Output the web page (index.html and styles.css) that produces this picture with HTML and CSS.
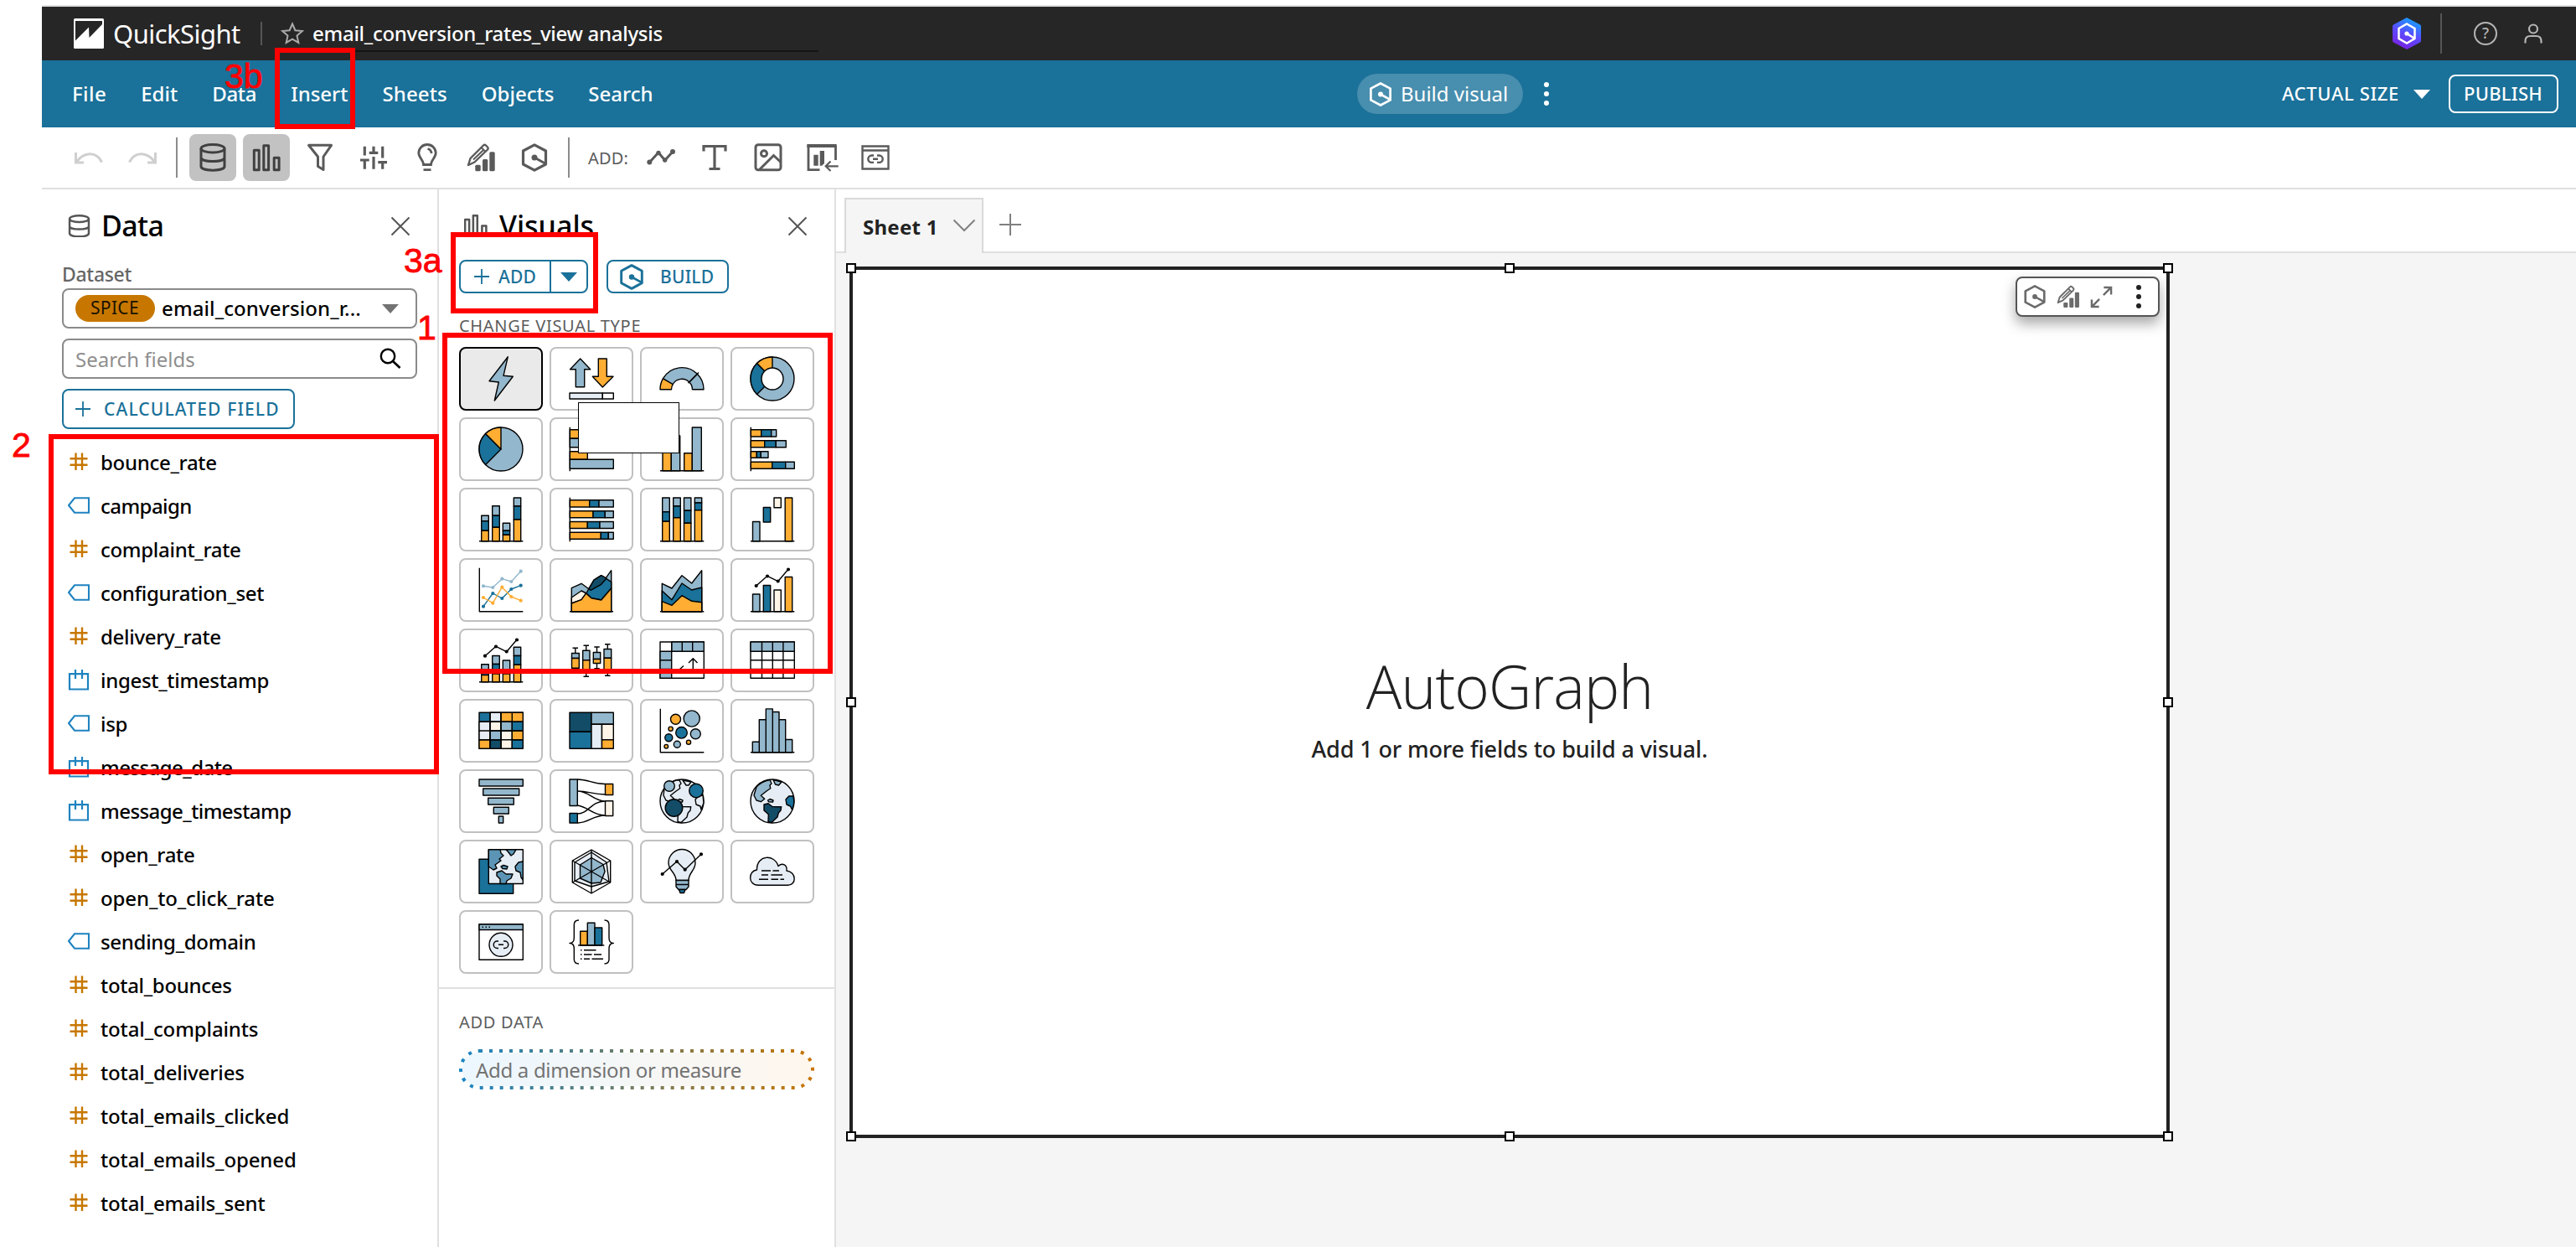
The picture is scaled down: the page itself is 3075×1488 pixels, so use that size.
FILE: index.html
```html
<!DOCTYPE html>
<html lang="en">
<head>
<meta charset="utf-8">
<title>email_conversion_rates_view analysis</title>
<link rel="stylesheet" href="styles.css">
</head>
<body>
<svg class="defs" width="0" height="0" aria-hidden="true">
  <symbol id="i-num" viewBox="0 0 26 26"><path d="M9.5 2.5V23M17 2.5V23M2.5 9.3H23.5M2.5 16.7H23.5" fill="none" stroke="#c77700" stroke-width="2.4"/></symbol>
  <symbol id="i-tag" viewBox="0 0 26 26"><path d="M25 4.3V21.7H8L1 13 8 4.3Z" fill="none" stroke="#1f83c0" stroke-width="2.1"/></symbol>
  <symbol id="i-date" viewBox="0 0 26 26"><path d="M2 6.2H24V24.5H2ZM9 1V12M17 1V12" fill="none" stroke="#1f83c0" stroke-width="2.2"/></symbol>
  <symbol id="i-hex" viewBox="0 0 56 56"><path d="M28 12.8 41.5 20V36L28 43.2 14.5 36V20Z" fill="none" stroke="currentColor" stroke-width="3.2" stroke-linejoin="round"/><circle cx="28" cy="28" r="3.5" fill="currentColor"/><path d="M28 28 40.7 35" stroke="currentColor" stroke-width="3"/></symbol>
  <symbol id="i-pencil" viewBox="0 0 56 56"><path d="M13 37 15.5 29 31 13.5Q32.5 12 34 13.5L36 15.5Q37.3 17 36 18.5L20.5 33.5Z" fill="none" stroke="currentColor" stroke-width="2.4" stroke-linejoin="round"/><path d="M28.5 16 33.5 21M19 30.5 30.5 19.5" stroke="currentColor" stroke-width="2"/><g fill="currentColor"><rect x="21.3" y="36.7" width="6.4" height="7.6" rx="1.5"/><rect x="30" y="30" width="6.3" height="14.3" rx="1.5"/><rect x="38.3" y="21.3" width="6.4" height="23" rx="1.5"/></g></symbol>
  <symbol id="i-close" viewBox="0 0 24 24"><path d="M1.5 1.5 22.5 22.5M22.5 1.5 1.5 22.5" fill="none" stroke="#555" stroke-width="2"/></symbol>
  <symbol id="i-db" viewBox="0 0 56 56"><g fill="none" stroke="currentColor" stroke-width="3"><ellipse cx="28" cy="17.3" rx="14" ry="4.8"/><path d="M14 17.3V38.5C14 44.7 42 44.7 42 38.5V17.3M14 28C14 34 42 34 42 28"/></g></symbol>
  <symbol id="i-bars" viewBox="0 0 56 56"><path d="M13.3 19.2H19.2V42.7H13.3ZM24.8 13.7H30.6V42.7H24.8ZM37.2 28.2H43.1V42.7H37.2Z" fill="none" stroke="currentColor" stroke-width="3" stroke-linejoin="round"/></symbol>
  <symbol id="i-land" viewBox="0 0 54 54"><path d="M12 5.5 20 2 24 2 26 6 24 8 24.7 11.7 20 15 13.3 20.3 17.7 24.3 13.3 27.7 8 26 5 20 6 12Z"/><path d="M28 2 38 4 35 8 32 8Z"/><path d="M17 31 22 29.7 27 33.5 37.7 33.7 37 38 34.3 41 33 46 26 52.5 22 51.5 22.3 42.7 17 38Z"/><path d="M52 20 46.7 21 43 25 44 31 49 33 50 37 53 29Z"/><path d="M21.5 26 24 24.5 28 26 27.5 28 22.5 27.7Z"/></symbol>
</svg>

<div class="app">
  <header class="titlebar">
    <svg class="logo" viewBox="0 0 36 36"><rect width="36" height="36" rx="1.5" fill="#fff"/><path d="M2 3H34V7L18.5 23 18 10.5 2 26.5Z" fill="#262626"/></svg>
    <span class="brand">QuickSight</span>
    <span class="title-sep"></span>
    <svg class="star" viewBox="0 0 28 28"><path d="M14 2.5 17.4 10.2 25.8 11 19.5 16.6 21.3 24.9 14 20.6 6.7 24.9 8.5 16.6 2.2 11 10.6 10.2Z" fill="none" stroke="#ababab" stroke-width="2"/></svg>
    <span class="analysis">email_conversion_rates_view analysis</span>
    <span class="title-line"></span>
    <div class="title-right">
      <svg class="qlogo" viewBox="0 0 34 38"><defs><linearGradient id="q" x1="0.7" y1="0" x2="0.3" y2="1"><stop offset="0" stop-color="#12a5ff"/><stop offset=".5" stop-color="#5a4bff"/><stop offset="1" stop-color="#7a1fe0"/></linearGradient></defs><path d="M17 0 33 8.5Q34 9 34 10.5V27.5Q34 29 33 29.5L17 38 1 29.5Q0 29 0 27.5V10.5Q0 9 1 8.5Z" fill="url(#q)"/><path d="M17 7.5 26.5 13V25L17 30.5 7.5 25V13Z" fill="none" stroke="#fff" stroke-width="2.5"/><circle cx="17" cy="19" r="2.6" fill="#fff"/><path d="M17 19 26.5 25" stroke="#fff" stroke-width="2.5"/></svg>
      <span class="right-sep"></span>
      <span class="help">?</span>
      <svg class="user" viewBox="0 0 22 24"><g fill="none" stroke="#b5b5b5" stroke-width="2.2"><circle cx="11" cy="6.5" r="5"/><path d="M1.5 23.5V21Q1.5 15 7.5 15H14.5Q20.5 15 20.5 21V23.5"/></g></svg>
    </div>
  </header>

  <nav class="menubar">
    <div class="menus"><span>File</span><span>Edit</span><span>Data</span><span>Insert</span><span>Sheets</span><span>Objects</span><span>Search</span></div>
    <div class="build-pill"><svg viewBox="12 10 32 36"><use href="#i-hex" width="56" height="56"/></svg><span>Build visual</span></div>
    <svg class="kebab light" viewBox="0 0 6 28"><circle cx="3" cy="3" r="3"/><circle cx="3" cy="14" r="3"/><circle cx="3" cy="25" r="3"/></svg>
    <div class="menu-right"><span class="size">ACTUAL SIZE</span><span class="caret white"></span><span class="publish">PUBLISH</span></div>
  </nav>

  <div class="toolbar">
    <span class="tool off"><svg viewBox="0 0 56 56"><g fill="none" stroke="currentColor" stroke-width="3"><path d="M12.5 22V34H22M13 33.5C22 21 37 20 43.5 33.5"/></g></svg></span>
    <span class="tool off"><svg viewBox="0 0 56 56"><g fill="none" stroke="currentColor" stroke-width="3"><path d="M43.5 22V34H34M43 33.5C34 21 19 20 12.5 33.5"/></g></svg></span>
    <span class="tool-sep"></span>
    <span class="tool on"><svg><use href="#i-db"/></svg></span>
    <span class="tool on"><svg><use href="#i-bars"/></svg></span>
    <span class="tool"><svg viewBox="0 0 56 56"><path d="M14.5 13.3H41.5L32 27V42.5L25.5 38.5V27Z" fill="none" stroke="currentColor" stroke-width="3" stroke-linejoin="round"/></svg></span>
    <span class="tool"><svg viewBox="0 0 56 56"><path d="M17.3 14.7V25.5M12 31H22.7M17.3 31V41.7M28 14.7V22.3M22.7 22.3H33.3M28 27V41.7M38.7 14.7V28.5M33.3 33.7H44M38.7 33.7V41.7" fill="none" stroke="currentColor" stroke-width="3.2"/></svg></span>
    <span class="tool"><svg viewBox="0 0 56 56"><g fill="none" stroke="currentColor" stroke-width="2.8"><path d="M23.5 36.5C23.5 31 17.8 28 17.8 22.5A10.2 10 0 0 1 38.2 22.5C38.2 28 32.5 31 32.5 36.5Z"/><path d="M28.5 17.5Q32.5 18.5 33.2 23M23.5 42.7H32.5"/></g></svg></span>
    <span class="tool"><svg><use href="#i-pencil"/></svg></span>
    <span class="tool"><svg><use href="#i-hex"/></svg></span>
    <span class="tool-sep second"></span>
    <span class="tool-label">ADD:</span>
    <span class="tool"><svg viewBox="0 0 56 56"><path d="M14.3 33.7 25 22 32.7 31.3 42 21" fill="none" stroke="currentColor" stroke-width="3"/><g fill="currentColor"><circle cx="14.3" cy="33.5" r="3"/><circle cx="25" cy="22.5" r="2.7"/><circle cx="32.7" cy="31" r="2.7"/><circle cx="42" cy="21" r="3"/></g></svg></span>
    <span class="tool"><svg viewBox="0 0 56 56"><path d="M15 20.5V14.5H41V20.5M28 14.5V41.5M21.5 41.5H34.5" fill="none" stroke="currentColor" stroke-width="3.2"/></svg></span>
    <span class="tool"><svg viewBox="0 0 56 56"><g fill="none" stroke="currentColor" stroke-width="3"><rect x="13" y="12.8" width="30" height="30" rx="3"/><circle cx="23" cy="23.3" r="3.5"/><path d="M17.5 42.5 34.5 25.5 43 33.5"/></g></svg></span>
    <span class="tool"><svg viewBox="0 0 56 56"><g fill="none" stroke="currentColor"><path d="M10.3 14H45.7" stroke-width="4"/><path d="M12 14V42.7H25.5M44.5 14V31" stroke-width="2.8"/><path d="M47.7 38.3H33M38.5 32.5 32.7 38.3 38.5 44" stroke-width="2.2"/></g><path d="M18.3 24.7H23.7V37.7H18.3ZM25.7 20H31V35L28 37.7H25.7Z" fill="currentColor"/></svg></span>
    <span class="tool"><svg viewBox="0 0 56 56"><g fill="none" stroke="currentColor" stroke-width="2.4"><path d="M12.5 14.5H43.5V41.5H12.5ZM12.5 19.5H43.5M26 25.5H23.5A4.2 4.2 0 0 0 23.5 33.9H26M30 25.5H32.5A4.2 4.2 0 0 1 32.5 33.9H30M25 29.7H31"/></g></svg></span>
  </div>

  <div class="workspace">
    <aside class="data-panel">
      <div class="panel-head"><svg class="head-icon" viewBox="12 11 32 33"><use href="#i-db" width="56" height="56"/></svg><h2>Data</h2><svg class="close"><use href="#i-close"/></svg></div>
      <div class="ds-label">Dataset</div>
      <div class="select"><span class="spice">SPICE</span><span class="ds-name">email_conversion_r...</span><span class="caret grey"></span></div>
      <div class="search"><span>Search fields</span><svg viewBox="0 0 26 26"><circle cx="10" cy="10" r="8.2" fill="none" stroke="#000" stroke-width="2.4"/><path d="M16 16 24.5 24" stroke="#000" stroke-width="2.8"/></svg></div>
      <div class="calc"><svg viewBox="0 0 18 18"><path d="M9 0V18M0 9H18" stroke="#1a7199" stroke-width="1.8"/></svg><span>CALCULATED FIELD</span></div>
      <ul class="fields">
        <li><svg><use href="#i-num"/></svg><span>bounce_rate</span></li>
        <li class="tight"><svg><use href="#i-tag"/></svg><span>campaign</span></li>
        <li><svg><use href="#i-num"/></svg><span>complaint_rate</span></li>
        <li><svg><use href="#i-tag"/></svg><span>configuration_set</span></li>
        <li><svg><use href="#i-num"/></svg><span>delivery_rate</span></li>
        <li><svg><use href="#i-date"/></svg><span>ingest_timestamp</span></li>
        <li><svg><use href="#i-tag"/></svg><span>isp</span></li>
        <li class="tight"><svg><use href="#i-date"/></svg><span>message_date</span></li>
        <li class="tight"><svg><use href="#i-date"/></svg><span>message_timestamp</span></li>
        <li><svg><use href="#i-num"/></svg><span>open_rate</span></li>
        <li class="loose"><svg><use href="#i-num"/></svg><span>open_to_click_rate</span></li>
        <li><svg><use href="#i-tag"/></svg><span>sending_domain</span></li>
        <li><svg><use href="#i-num"/></svg><span>total_bounces</span></li>
        <li class="loose"><svg><use href="#i-num"/></svg><span>total_complaints</span></li>
        <li class="loose"><svg><use href="#i-num"/></svg><span>total_deliveries</span></li>
        <li class="loose"><svg><use href="#i-num"/></svg><span>total_emails_clicked</span></li>
        <li class="loose"><svg><use href="#i-num"/></svg><span>total_emails_opened</span></li>
        <li class="loose"><svg><use href="#i-num"/></svg><span>total_emails_sent</span></li>
      </ul>
    </aside>

    <aside class="visuals-panel">
      <div class="visuals-top">
        <div class="panel-head"><svg class="head-icon" viewBox="12 11 33 33"><use href="#i-bars" width="56" height="56"/></svg><h2>Visuals</h2><svg class="close"><use href="#i-close"/></svg></div>
        <div class="actions">
          <div class="add"><span class="add-main"><svg viewBox="0 0 18 18"><path d="M9 0V18M0 9H18" stroke="#1a7199" stroke-width="1.8"/></svg><span>ADD</span></span><span class="add-more"><span class="caret blue"></span></span></div>
          <div class="build"><svg viewBox="12 11 32 34"><use href="#i-hex" width="56" height="56"/></svg><span>BUILD</span></div>
        </div>
        <div class="section-label">CHANGE VISUAL TYPE</div>
        <div class="tiles">
          <span class="tile sel"><svg viewBox="0 0 54 54"><path class="L" d="M35.3.7 30 23.3 41.3 24.3 19.3 53 24.3 31 13 29.7Z"/></svg></span>
          <span class="tile"><svg viewBox="0 0 54 54"><path class="L" d="M13.7 3 25.7 15.7H18.7V36.7H8.3V15.7H1.5Z"/><path class="O" d="M35.3 3H45.3V24.3H53L40.3 37 28.3 24.3H35.3Z"/><path class="P" d="M1 44H40.3V51H1Z"/><path class="W" d="M40.3 44H53.3V51H40.3Z"/></svg></span>
          <span class="tile"><svg viewBox="0 0 54 54"><path class="O" d="M1 39.7A26 26 0 0 1 4.5 26.7L16.2 33.5A12.5 12.5 0 0 0 14.5 39.7Z"/><path class="L" d="M4.5 26.7A26 26 0 0 1 45.4 21.3L35.8 30.9A12.5 12.5 0 0 0 16.2 33.5Z"/><path class="L" d="M45.4 21.3A26 26 0 0 1 53 39.7H39.5A12.5 12.5 0 0 0 35.8 30.9Z"/><path d="M34.5 32.2 47 19.5"/></svg></span>
          <span class="tile"><svg viewBox="0 0 54 54"><circle class="L" cx="27" cy="27" r="26"/><path class="B" d="M8.6 8.6A26 26 0 0 0 8.6 45.4L27 27Z"/><path class="O" d="M8.6 8.6A26 26 0 0 1 27 1V27Z"/><circle class="W" cx="27" cy="27" r="13"/></svg></span>

          <span class="tile"><svg viewBox="0 0 54 54"><circle class="L" cx="27" cy="27" r="26"/><path class="B" d="M8.6 8.6A26 26 0 0 0 8.6 45.4L27 27Z"/><path class="O" d="M8.6 8.6A26 26 0 0 1 27 1V27Z"/></svg></span>
          <span class="tile"><svg viewBox="0 0 54 54"><path class="O" d="M1.3 3.7H30V14.3H1.3ZM1.3 29.7H22.3V39.3H1.3Z"/><path class="L" d="M1.3 14.3H40V24.7H1.3ZM1.3 39.3H53.3V50.3H1.3Z"/><path d="M1.3.7V53.3"/></svg></span>
          <span class="tile"><svg viewBox="0 0 54 54"><path class="O" d="M4 28H14.3V52.7H4ZM29.7 31.7H39.3V52.7H29.7Z"/><path class="L" d="M14.3 11H24.7V52.7H14.3ZM39.3 1H50.3V52.7H39.3Z"/><path d="M1 52.7H53.3"/></svg></span>
          <span class="tile"><svg viewBox="0 0 54 54"><path class="O" d="M1.3 3.7H13.7V12H1.3ZM1.3 16.7H17.7V24.7H1.3ZM1.3 29.7H8.3V37.3H1.3ZM1.3 42.3H26.7V50.3H1.3Z"/><path class="B" d="M13.7 3.7H25.7V12H13.7ZM17.7 16.7H31.3V24.7H17.7ZM8.3 29.7H13.3V37.3H8.3ZM26.7 42.3H42.7V50.3H26.7Z"/><path class="L" d="M25.7 3.7H31.7V12H25.7ZM31.3 16.7H43.3V24.7H31.3ZM13.3 29.7H22V37.3H13.3ZM42.7 42.3H53.3V50.3H42.7Z"/><path d="M1.3.7V53.3"/></svg></span>

          <span class="tile"><svg viewBox="0 0 54 54"><path class="L" d="M3.7 22.3H12.3V28.7H3.7ZM16.7 10.7H25.3V22.3H16.7ZM29.3 31.3H37.7V40.3H29.3ZM42.3 1H50.7V11H42.3Z"/><path class="B" d="M3.7 28.7H12.3V40.3H3.7ZM16.7 22.3H25.3V36.3H16.7ZM29.3 40.3H37.7V45.3H29.3ZM42.3 11H50.7V27H42.3Z"/><path class="O" d="M3.7 40.3H12.3V52.7H3.7ZM16.7 36.3H25.3V52.7H16.7ZM29.3 45.3H37.7V52.7H29.3ZM42.3 27H50.7V52.7H42.3Z"/><path d="M1 52.7H53.3"/></svg></span>
          <span class="tile"><svg viewBox="0 0 54 54"><path class="O" d="M1.3 3.7H24.7V12H1.3ZM1.3 16.7H29V24.7H1.3ZM1.3 29.5H22.3V37.5H1.3ZM1.3 42.3H38.3V50.3H1.3Z"/><path class="B" d="M24.7 3.7H36V12H24.7ZM29 16.7H43.3V24.7H29ZM22.3 29.5H37V37.5H22.3ZM38.3 42.3H47.3V50.3H38.3Z"/><path class="L" d="M36 3.7H53.3V12H36ZM43.3 16.7H53.3V24.7H43.3ZM37 29.5H53.3V37.5H37ZM47.3 42.3H53.3V50.3H47.3Z"/><path d="M1.3.7V53.3"/></svg></span>
          <span class="tile"><svg viewBox="0 0 54 54"><path class="L" d="M3.7 1H12.3V17.7H3.7ZM16.7 1H25.3V11H16.7ZM29.5 1H37.9V16.3H29.5ZM42.3 1H50.7V7H42.3Z"/><path class="B" d="M3.7 17.7H12.3V29.3H3.7ZM16.7 11H25.3V24.7H16.7ZM29.5 16.3H37.9V31.3H29.5ZM42.3 7H50.7V15.7H42.3Z"/><path class="O" d="M3.7 29.3H12.3V52.7H3.7ZM16.7 24.7H25.3V52.7H16.7ZM29.5 31.3H37.9V52.7H29.5ZM42.3 15.7H50.7V52.7H42.3Z"/><path d="M1 52.7H53.3"/></svg></span>
          <span class="tile"><svg viewBox="0 0 54 54"><path class="L" d="M3.5 29.5H12V52.7H3.5Z"/><path class="B" d="M16.3 12.5H24.7V30H16.3Z"/><path class="C" d="M29 1H37.3V12.7H29Z"/><path class="O" d="M42.2 1H50.7V52.7H42.2Z"/><path d="M1 52.7H53.3"/></svg></span>

          <span class="tile"><svg viewBox="0 0 54 54"><path d="M1.3.7V52.7H53.3"/><g class="ll"><polyline points="6,22.3 17.3,24 28.3,13.7 39.3,17 50.7,4.7"/></g><g class="lb"><polyline points="6,46.7 17.3,31 28.3,37 39.3,26 50.7,21.7"/></g><g class="lo"><polyline points="6,36 17.3,42.7 28.3,23.7 39.3,35 50.7,39.7"/></g><g class="dots"><path stroke="#93b7cc" d="M6 22.3h0M17.3 24h0M28.3 13.7h0M39.3 17h0M50.7 4.7h0"/><path stroke="#1a7199" d="M6 46.7h0M17.3 31h0M28.3 37h0M39.3 26h0M50.7 21.7h0"/><path stroke="#ffad33" d="M6 36h0M17.3 42.7h0M28.3 23.7h0M39.3 35h0M50.7 39.7h0"/></g></svg></span>
          <span class="tile"><svg viewBox="0 0 54 54"><path class="L" d="M3.3 24.7 15 19.3 26 27.3 38.7 20.3 50.7 3.7V52.7H3.3Z"/><path class="C" d="M3.3 36 15 28 21 31 15 38.7 3.3 43Z"/><path class="B" d="M21 31 24 25 30 15 38.7 9.7 50.7 17.3V25L38.7 39 27 36.7Z"/><path class="D" d="M24 25.5 30 15 38.7 9.7 45 13 38.7 20.3 26 27.3Z"/><path class="O" d="M3.3 43 15 38.7 20.5 31 27 36.7 38.7 39 50.7 25V52.7H3.3Z"/><path d="M1 52.7H53"/></svg></span>
          <span class="tile"><svg viewBox="0 0 54 54"><path class="L" d="M3.3 19.3 15 25 27 9.7 38.7 19 50.7 3.7V52.7H3.3Z"/><path class="B" d="M3.3 28 15 38.7 27 19 38.7 27 50.7 24V52.7H3.3Z"/><path class="O" d="M3.3 40.7 15 45.3 27 33.7 38.7 40.3 50.7 41.7V52.7H3.3Z"/><path d="M1 52.7H53.3"/></svg></span>
          <span class="tile"><svg viewBox="0 0 54 54"><path class="L" d="M3.5 32H12V52.7H3.5Z"/><path class="B" d="M16.3 21.5H24.7V52.7H16.3Z"/><path class="C" d="M29 27H37.3V52.7H29Z"/><path class="O" d="M42.2 11.5H50.7V52.7H42.2Z"/><path d="M1 52.7H53.3M7.7 22 21 10.3 33.7 16.7 46 2.3"/><path class="pts" d="M7.7 22h0M21 10.5h0M33.7 16.5h0M46 2.5h0"/></svg></span>

          <span class="tile"><svg viewBox="0 0 54 54"><path class="L" d="M3.7 31.7H12.3V38H3.7ZM16.7 21.5H25.3V31.5H16.7ZM29.3 27H37.7V43H29.3ZM42.3 11.3H50.7V21.5H42.3Z"/><path class="B" d="M3.7 38H12.3V44.5H3.7ZM16.7 31.5H25.3V43H16.7ZM42.3 21.5H50.7V32.3H42.3Z"/><path class="O" d="M3.7 44.5H12.3V52.7H3.7ZM16.7 43H25.3V52.7H16.7ZM29.3 43H37.7V52.7H29.3ZM42.3 32.3H50.7V52.7H42.3Z"/><path d="M1 52.7H53.3M8 21.7 21 10.3 33.7 16.7 46 2.3"/><path class="pts" d="M8 21.7h0M21 10.5h0M33.7 16.5h0M46 2.5h0"/></svg></span>
          <span class="tile"><svg viewBox="0 0 54 54"><path d="M7.8 12.3V41.7M4.5 12.3H11M4.5 41.7H11M20.7 9.3V46.3M17.5 9.3H24M17.5 46.3H24M33.5 11V36.7M30.3 11H36.7M30.3 36.7H36.7M46.3 7.7V45.3M43 7.7H49.5M43 45.3H49.5"/><path class="L" d="M3.5 18.5H12.3V24.5H3.5ZM16.7 15.3H25V26.7H16.7ZM29.3 17.5H37.7V25.5H29.3ZM42 13.5H50.7V24.2H42Z"/><path class="O" d="M3.5 24.5H12.3V36.3H3.5ZM16.7 26.7H25V38H16.7ZM29.3 25.5H37.7V30.5H29.3ZM42 24.2H50.7V38H42Z"/></svg></span>
          <span class="tile"><svg viewBox="0 0 54 54"><path class="W" d="M1 5H53.3V48.3H1Z"/><path class="L" d="M14.7 5H53.3V16.3H14.7ZM1 16.3H14.7V48.3H1Z"/><path d="M27.3 5V16.3M39.7 5V16.3M1 26.7H14.7M1 37.5H14.7M14.7 5V16.3M35 30 40.3 24.7 45.5 30M40.3 24.7V38H25M29 33.5 24 38 29 42.5"/></svg></span>
          <span class="tile"><svg viewBox="0 0 54 54"><path class="W" d="M1 5H53.3V48.3H1Z"/><path class="L" d="M1 5H53.3V16.3H1Z"/><path d="M1 26.7H53.3M1 37.5H53.3M14.5 5V48.3M27.3 5V48.3M39.9 5V48.3"/></svg></span>

          <span class="tile"><svg viewBox="0 0 54 54"><path class="B" d="M1 5.3H53.3V48.3H1Z"/><path class="P" d="M14 5.3H27V16.3H14ZM1 16.3H14V37.7H1Z"/><path class="O" d="M27 5.3H53.3V16.3H27ZM40.3 27H53.3V37.7H40.3ZM1 37.7H14V48.3H1Z"/><path class="C" d="M14 16.3H27V27H14ZM27 27H40.3V48.3H27Z"/><path class="L" d="M27 16.3H40.3V27H27ZM14 27H27V37.7H14Z"/><path class="D" d="M14 37.7H27V48.3H14Z"/><path d="M1 16.3H53.3M1 27H53.3M1 37.7H53.3M14 5.3V48.3M27 5.3V48.3M40.3 5.3V48.3"/></svg></span>
          <span class="tile"><svg viewBox="0 0 54 54"><path class="D" d="M1 5.3H27V28.3H1Z"/><path class="B" d="M1 28.3H27V48.3H1Z"/><path class="L" d="M27 5.3H53.3V19.3H27Z"/><path class="P" d="M27 19.3H39.5V48.3H27Z"/><path class="C" d="M39.5 19.3H53.3V37.7H39.5Z"/><path class="O" d="M39.5 37.7H53.3V48.3H39.5Z"/></svg></span>
          <span class="tile"><svg viewBox="0 0 54 54"><path d="M1.3.7V52.7H53.3"/><g class="O"><circle cx="19.5" cy="13.3" r="6"/><circle cx="13.6" cy="24.7" r="2.6"/><circle cx="35" cy="40.7" r="2.6"/><circle cx="8.3" cy="45.7" r="2.3"/></g><g class="L"><circle cx="38.7" cy="12.5" r="9.6"/><circle cx="43.3" cy="30.7" r="6"/><circle cx="21.3" cy="43.3" r="4"/></g><g class="B"><circle cx="26.5" cy="29.3" r="6.8"/><circle cx="11.3" cy="35.3" r="4.5"/></g></svg></span>
          <span class="tile"><svg viewBox="0 0 54 54"><path class="L" d="M3.3 40.3H11.3V52.7H3.3ZM11.3 13.7H19.3V52.7H11.3ZM19.3.9H27.3V52.7H19.3ZM27.3 4.5H35V52.7H27.3ZM35 13.7H42.7V52.7H35ZM42.7 37.5H50.7V52.7H42.7Z"/><path d="M1 52.7H53.3"/></svg></span>

          <span class="tile"><svg viewBox="0 0 54 54"><path class="L" d="M1 1H53.3V9H1ZM5.7 12H48.7V20H5.7ZM11.7 23.3H42.3V31H11.7ZM18.3 34.3H36.3V42H18.3ZM24.3 45H29.7V53H24.3Z"/></svg></span>
          <span class="tile"><svg viewBox="0 0 54 54"><path d="M10.3 1C24 1 28 6.5 43.3 6.5M10.3 15C24 15 28 19 43.3 19M10.3 15C24 15 30 27 43.3 27M10.3 32C24 34 28 44 43.3 44M10.3 42C24 42 26 27 43.3 27M10.3 53C24 53 28 44 43.3 44"/><path class="L" d="M1 1H10.3V32.5H1Z"/><path class="B" d="M1 41.5H10.3V53H1Z"/><path class="O" d="M43.5 6.5H52.7V19.5H43.5Z"/><path class="C" d="M43.5 26.7H52.7V44.5H43.5Z"/></svg></span>
          <span class="tile"><svg viewBox="0 0 54 54"><circle class="P" cx="27" cy="27" r="26"/><use class="P" href="#i-land" width="54" height="54"/><circle class="L" cx="12" cy="9" r="6.3"/><circle class="B" cx="44" cy="14.5" r="8.3"/><circle class="D" cx="17.5" cy="35" r="10.3"/></svg></span>
          <span class="tile"><svg viewBox="0 0 54 54"><circle class="P" cx="27" cy="27" r="26"/><path class="L" d="M8 10Q14 3.5 24 1.5L26 6 24 8 24.7 11.7 20 15 13.3 20.3 17.7 24.3 13.3 27.7 8 26 5 20Z"/><path class="L" d="M28 1.5 38 4 34.5 8 30.5 7Z"/><path class="D" d="M17 31 22 29.7 27 33.5 37.7 33.7 37 38 34.3 41 33 46 26 52.5 22 51.5 22.3 42.7 17 38Z"/><path class="B" d="M52 21 46.7 21 43 25 44 31 48.5 33 50.5 37Q54 30 52 21Z"/><path class="L" d="M21.5 26 24 24.5 28 26 27.5 28 22.5 27.7Z"/></svg></span>

          <span class="tile"><svg viewBox="0 0 54 54"><path class="B" d="M1 12.3H41.7V53.3H1Z"/><path class="P" d="M12.3.7H53.3V41.5H12.3Z"/><g class="M"><path d="M12.3.7H26L27 5 30 8 25 12 27 14 20 19 22 23 18 25 12.3 21Z"/><path d="M33 .7H45L42 6 39 8 36 4Z"/><path d="M22 28 28 26 33 30 41 30 39 35 34 38 33 41.5H26L26 36 22 32Z"/><path d="M53.3 15 48 16 44 21 45 26 50 28 51 34 53.3 37Z"/><path d="M27 21 30 19.5 35 21 34 24 29 23.5Z"/></g></svg></span>
          <span class="tile"><svg viewBox="0 0 54 54"><path class="W" d="M27 1 49.7 14V40L27 53 4.3 40V14Z"/><path class="P" d="M27 4 45 16 48 39 27 45 7 38V16Z"/><path class="L" d="M27 10.5 41 18.5 43 27 38 40 27 41 13.5 35V19Z"/><path d="M27 1V53M4.3 14 49.7 40M49.7 14 4.3 40"/></svg></span>
          <span class="tile"><svg viewBox="0 0 54 54"><path class="P" d="M20 37.5C20 28 11 26 11 16.5A16 16 0 0 1 43 16.5C43 26 35 28 35 37.5Z"/><path class="L" d="M20 37.5H35V45L32 48.5H23L20 45Z"/><path class="B" d="M23.5 48.5H31L29.5 52.5H25Z"/><path d="M20 42.5H35M3.7 30 21 15 30.7 24.7 50 6.3"/><path class="pts" d="M3.7 30h0M21 15h0M30.7 24.7h0M50 6.3h0"/></svg></span>
          <span class="tile"><svg viewBox="0 0 54 54"><path class="P" d="M10 43.3C-2.5 43.3-2 26 8.5 25C8 6.5 30 6 34 20.5C39 16 45 19 44 26C56 27.5 56 43.3 45.5 43.3Z"/><path d="M14 26H25M27.5 26H35M14 31H22M25.5 31H39M11 36.3H22M25.5 36.3H34M36.5 36.3H41"/></svg></span>

          <span class="tile"><svg viewBox="0 0 54 54"><path class="W" d="M1 6H53.3V48.3H1Z"/><path class="L" d="M1 6H53.3V12.5H1Z"/><circle class="P" cx="27" cy="30.3" r="14"/><path d="M24 26H22.5A4.2 4.2 0 0 0 22.5 34.5H24M30 26H31.5A4.2 4.2 0 0 1 31.5 34.5H30M24 30.3H30M4.5 9.2h1.5M8.5 9.2h1.5M12.5 9.2h1.5"/></svg></span>
          <span class="tile"><svg viewBox="0 0 54 54"><path d="M12 1Q6.3 1 6.3 6.5V22Q6.3 28.5 1 28.5Q6.3 28.5 6.3 35V47.5Q6.3 53 12 53M42.5 1Q48 1 48 6.5V22Q48 28.5 53.3 28.5Q48 28.5 48 35V47.5Q48 53 42.5 53M14 36.7h1.5M18 36.7H32.5M14 42h1.5M18 42H27.5M30 42H39M14 47.3h1.5M18 47.3H25M27.5 47.3H41"/><path class="O" d="M13.7 14.3H22.3V31H13.7Z"/><path class="L" d="M22.3 4.3H31V31H22.3Z"/><path class="B" d="M31 10H39.7V31H31Z"/><path d="M11 31H42.3"/></svg></span>
        </div>
      </div>
      <div class="wells">
        <div class="section-label">ADD DATA</div>
        <div class="well">
          <svg viewBox="0 0 424 48"><defs><linearGradient id="ws" x1="0" x2="1"><stop offset="0" stop-color="#1b85c4"/><stop offset="1" stop-color="#c97500"/></linearGradient><linearGradient id="wf" x1="0" x2="1"><stop offset="0" stop-color="#ecf7ff"/><stop offset="1" stop-color="#fff7ee"/></linearGradient></defs><rect x="2" y="2" width="420" height="44" rx="22" fill="url(#wf)"/><rect x="2" y="2" width="420" height="44" rx="22" fill="none" stroke="#fff" stroke-width="4"/><rect x="2" y="2" width="420" height="44" rx="22" fill="none" stroke="url(#ws)" stroke-width="4" stroke-dasharray="4 8"/></svg>
          <span>Add a dimension or measure</span>
        </div>
      </div>
    </aside>

    <main class="main">
      <div class="tabs">
        <div class="tab"><span>Sheet 1</span><svg viewBox="0 0 28 16"><path d="M1.5 1.5 14 14 26.5 1.5" fill="none" stroke="#808080" stroke-width="2"/></svg></div>
        <div class="tab-rest"><svg viewBox="0 0 28 28"><path d="M14 1V27M1 14H27" stroke="#808080" stroke-width="2"/></svg></div>
      </div>
      <div class="sheet">
        <div class="visual">
          <div class="empty"><div class="auto">AutoGraph</div><div class="hint">Add 1 or more fields to build a visual.</div></div>
          <div class="vmenu"><svg class="vi" viewBox="12 10 32 36"><use href="#i-hex" width="56" height="56"/></svg><svg class="vi" viewBox="11 10 35 36"><use href="#i-pencil" width="56" height="56"/></svg><svg class="ve" viewBox="0 0 28 28"><path d="M17 2H26V11M26 2 16.5 11.5M11 26H2V17M2 26 11.5 16.5" fill="none" stroke="currentColor" stroke-width="2.5"/></svg><svg class="kebab" viewBox="0 0 6 28"><circle cx="3" cy="3" r="3"/><circle cx="3" cy="14" r="3"/><circle cx="3" cy="25" r="3"/></svg></div>
          <i class="h tl"></i><i class="h tc"></i><i class="h tr"></i><i class="h ml"></i><i class="h mr"></i><i class="h bl"></i><i class="h bc"></i><i class="h br"></i>
        </div>
      </div>
    </main>
  </div>
</div>

<div class="note-box insert-box"></div><div class="note n3b">3b</div>
<div class="note-box add-box"></div><div class="note n3a">3a</div>
<div class="note-box types-box"></div><div class="note n1">1</div>
<div class="note-box fields-box"></div><div class="note n2">2</div>
<div class="blank"></div>
</body>
</html>
```
FILE: styles.css
```css
* { box-sizing: border-box; }
body { margin: 0; width: 3075px; height: 1488px; overflow: hidden; position: relative; background: #fff; font-family: "Noto Sans", "Open Sans", sans-serif; font-size: 24px; font-weight: 500; color: #000; }
svg { display: block; flex: none; }
.defs { position: absolute; }
span { white-space: nowrap; }
h2 { margin: 0; font-size: 34px; font-weight: 500; line-height: 40px; }

.app { margin-left: 50px; padding-top: 6px; height: 1488px; display: flex; flex-direction: column; }

/* Title bar */
.titlebar { height: 66px; border-top: 2px solid #e0e0e0; background: #262626; color: #fff; display: flex; align-items: center; padding-left: 38px; padding-right: 40px; position: relative; flex: none; }
.logo { width: 36px; height: 36px; }
.brand { margin-left: 11px; width: 153px; font-size: 31px; font-weight: 400; line-height: 60px; letter-spacing: -.55px; }
.title-sep { width: 2px; height: 28px; margin-left: 23px; background: #555; }
.star { width: 28px; height: 28px; margin-left: 22px; }
.analysis { margin-left: 10px; padding-bottom: 2px; letter-spacing: -.28px; }
.title-line { position: absolute; left: 373px; top: 52px; width: 554px; height: 2px; background: #151515; }
.title-right { margin-left: auto; display: flex; align-items: center; }
.qlogo { width: 34px; height: 38px; }
.right-sep { width: 2px; height: 48px; background: #555; margin-left: 23px; }
.help { width: 28px; height: 28px; margin-left: 38px; border: 2.5px solid #b5b5b5; border-radius: 50%; color: #b5b5b5; font-size: 18px; line-height: 23px; text-align: center; }
.user { width: 22px; height: 24px; margin-left: 32px; }

/* Menu bar */
.menubar { height: 80px; background: #1a7199; color: #fff; display: flex; align-items: center; padding: 0 21px 0 36px; flex: none; position: relative; }
.menus { display: flex; gap: 41px; width: 1534px; padding-bottom: 2px; }
.menus span:nth-child(1) { letter-spacing: .45px; }
.menus span:nth-child(3) { letter-spacing: -.3px; }
.menus span:nth-child(5) { letter-spacing: .1px; }
.build-pill { width: 198px; height: 48px; border-radius: 24px; background: #488eae; display: flex; align-items: center; padding-left: 14px; }
.build-pill svg { width: 28px; height: 31px; }
.build-pill span { margin-left: 10px; font-weight: 400; padding-bottom: 2px; }
.kebab { width: 6px; height: 28px; fill: #222; }
.kebab.light { fill: #fff; margin-left: 25px; }
.menu-right { margin-left: auto; display: flex; align-items: center; font-size: 22px; }
.size { width: 140px; letter-spacing: .64px; padding-bottom: 2px; }
.caret { width: 0; height: 0; border: 10px solid transparent; border-bottom: 0; border-top: 11px solid; flex: none; }
.caret.white { border-top-color: #fff; margin: 0 22px 0 17px; }
.publish { width: 131px; height: 46px; border: 2px solid #fff; border-radius: 8px; display: flex; align-items: center; padding: 0 0 2px 16px; letter-spacing: .27px; }

/* Toolbar */
.toolbar { height: 74px; border-bottom: 2px solid #e0e0e0; padding-left: 28px; display: flex; align-items: center; gap: 8px; color: #5a5a5a; flex: none; }
.tool { width: 56px; height: 56px; border-radius: 8px; }
.tool svg { width: 56px; height: 56px; }
.tool.on { background: #c2c2c2; color: #404040; }
.tool.off { color: #cfcfcf; }
.tool-sep { width: 2px; height: 48px; background: #8c8c8c; margin: 0 6px 0 4px; }
.tool-label { width: 51px; font-size: 20px; font-weight: 400; margin-left: 8px; letter-spacing: .16px; }
.tool-sep.second { margin-right: 6px; }

/* Data panel */
.workspace { flex: 1; display: flex; min-height: 0; }
.data-panel { width: 474px; border-right: 2px solid #e0e0e0; padding: 20px 24px 0; flex: none; }
.panel-head { display: flex; align-items: center; height: 46px; margin-bottom: 2px; color: #555; }
.panel-head h2 { color: #000; }
.data-panel .head-icon { width: 27px; height: 27px; margin-left: 7px; }
.data-panel h2 { margin-left: 13px; letter-spacing: -.6px; }
.close { width: 24px; height: 24px; margin: 2px 8px 0 auto; }
.ds-label { color: #666; height: 50px; line-height: 66px; letter-spacing: -.3px; font-size: 23px; }
.select, .search, .calc { height: 48px; border: 2px solid #8a8a8a; border-radius: 8px; display: flex; align-items: center; }
.spice { width: 95px; height: 32px; margin-left: 14px; border-radius: 16px; background: #c77700; font-size: 21px; line-height: 31px; padding-left: 18px; color: #1a1200; font-weight: 400; letter-spacing: .34px; }
.ds-name { margin-left: 8px; padding-bottom: 1px; letter-spacing: .1px; }
.caret.grey { border-top-color: #737373; margin-left: auto; margin-right: 20px; }
.search { margin-top: 12px; color: #8f8f8f; padding: 0 17px 0 14px; justify-content: space-between; font-weight: 400; }
.search svg { width: 26px; height: 26px; }
.calc { margin-top: 12px; width: 278px; border-color: #1a7199; color: #1a7199; font-size: 21px; padding-left: 14px; letter-spacing: 1.15px; }
.calc svg { width: 18px; height: 18px; margin-right: 16px; }
.fields { list-style: none; margin: 13px 0 0; padding: 0 0 0 7px; letter-spacing: -.3px; }
.fields li { height: 52px; display: flex; align-items: center; }
.fields .tight { letter-spacing: -.56px; }
.fields .loose { letter-spacing: -.12px; }
.fields svg { width: 26px; height: 26px; margin-right: 13px; }

/* Visuals panel */
.visuals-panel { width: 474px; border-right: 2px solid #e0e0e0; flex: none; }
.visuals-top { height: 954px; border-bottom: 2px solid #e0e0e0; padding: 20px 24px 0; }
.visuals-panel .head-icon { width: 28px; height: 28px; margin-left: 6px; }
.visuals-panel h2 { margin-left: 14px; }
.actions { display: flex; gap: 22px; margin-top: 18px; }
.add, .build { height: 40px; border: 2px solid #1a7199; border-radius: 8px; display: flex; align-items: center; color: #1a7199; font-size: 21px; letter-spacing: .2px; }
.add { width: 154px; }
.add-main { width: 106px; display: flex; align-items: center; padding-left: 16px; gap: 11px; }
.add svg { width: 18px; height: 18px; }
.add-more { border-left: 2px solid #1a7199; align-self: stretch; flex: 1; display: flex; align-items: center; justify-content: center; }
.caret.blue { border-top-color: #1a7199; }
.build { width: 146px; padding-left: 13px; }
.build svg { width: 30px; height: 31px; margin-right: 19px; }
.section-label { color: #5c5c5c; font-size: 20px; font-weight: 400; line-height: 24px; letter-spacing: .7px; }
.actions + .section-label { margin-top: 27px; }
.tiles { margin-top: 13px; display: grid; grid-template-columns: repeat(4, 100px); gap: 8px; }
.tile { height: 76px; border: 2px solid #c0c0c0; border-radius: 8px; display: flex; align-items: center; justify-content: center; }
.tile.sel { border-color: #000; background: #eaeaea; }
.tile svg { width: 54px; height: 54px; fill: none; stroke: #000; stroke-width: 1.4; stroke-linejoin: round; overflow: visible; }
.L { fill: #93b7cc; } .B { fill: #1a7199; } .O { fill: #ffad33; } .D { fill: #124c67; } .C { fill: #fff4e8; } .P { fill: #e6edf4; } .W { fill: #fff; } .M { fill: #5b94b5; }
.ll { stroke: #93b7cc; } .lb { stroke: #1a7199; } .lo { stroke: #ffad33; }
.dots, .pts { stroke-width: 4.2; stroke-linecap: round; }

.wells { padding: 28px 24px; }
.well { position: relative; width: 424px; height: 48px; margin-top: 20px; display: flex; align-items: center; padding-left: 20px; color: #737373; font-weight: 400; letter-spacing: -.32px; }
.well svg { position: absolute; left: 0; top: 0; width: 424px; height: 48px; }
.well span { position: relative; }

/* Sheet */
.main { flex: 1; display: flex; flex-direction: column; background: #f5f5f5; min-width: 0; }
.tabs { height: 76px; display: flex; background: #fff; flex: none; }
.tabs::before { content: ""; width: 10px; border-bottom: 2px solid #e0e0e0; }
.tab { width: 166px; margin-top: 10px; background: #f5f5f5; border: 2px solid #d9d9d9; border-bottom: 0; display: flex; align-items: center; padding: 0 7px 0 20px; justify-content: space-between; font-weight: 700; color: #222; letter-spacing: .25px; }
.tab svg { width: 28px; height: 16px; margin-top: -2px; }
.tab-rest { flex: 1; border-bottom: 2px solid #e0e0e0; padding: 28px 0 0 18px; }
.tab-rest svg { width: 28px; height: 28px; }
.sheet { padding: 16px; }
.visual { position: relative; width: 1576px; height: 1040px; border: 4px solid #222; background: #fff; color: #222; display: flex; align-items: center; justify-content: center; }
.empty { text-align: center; padding-top: 11px; }
.auto { font-family: "Open Sans", "Noto Sans", sans-serif; font-weight: 330; font-size: 71px; line-height: 90px; letter-spacing: -.9px; }
.hint { font-size: 27px; line-height: 40px; margin-top: 10px; letter-spacing: -.12px; }
.h { position: absolute; width: 12px; height: 12px; border: 2px solid #000; background: #fff; }
.tl, .tc, .tr { top: -8px; } .bl, .bc, .br { bottom: -8px; } .ml, .mr { top: 510px; }
.tl, .ml, .bl { left: -8px; } .tr, .mr, .br { right: -8px; } .tc, .bc { left: 778px; }
.vmenu { position: absolute; right: 8px; top: 8px; width: 172px; height: 48px; border: 2px solid #555; border-radius: 8px; background: #fff; box-shadow: 0 8px 16px rgba(0,0,0,.35); color: #6b6b6b; display: flex; align-items: center; padding-left: 7px; gap: 12px; }
.vi { width: 28px; height: 30px; }
.ve { width: 27px; height: 27px; }
.vmenu .kebab { margin-left: 16px; }

/* Red call-outs over the window */
.note { position: absolute; color: #f00; font: 400 41px/40px "Liberation Sans", Arial, sans-serif; -webkit-text-stroke: .8px #f00; }
.note-box { position: absolute; border: 6px solid #f00; }
.insert-box { left: 328px; top: 57px; width: 96px; height: 97px; }
.add-box { left: 538px; top: 277px; width: 176px; height: 97px; }
.types-box { left: 528px; top: 397px; width: 466px; height: 407px; }
.fields-box { left: 58px; top: 518px; width: 466px; height: 406px; }
.n3b { left: 268px; top: 71px; }
.n3a { left: 482px; top: 291px; }
.n1 { left: 498px; top: 371px; }
.n2 { left: 14px; top: 511px; }
.blank { position: absolute; left: 690px; top: 480px; width: 121px; height: 61px; border: 1px solid #000; background: #fff; }
```
